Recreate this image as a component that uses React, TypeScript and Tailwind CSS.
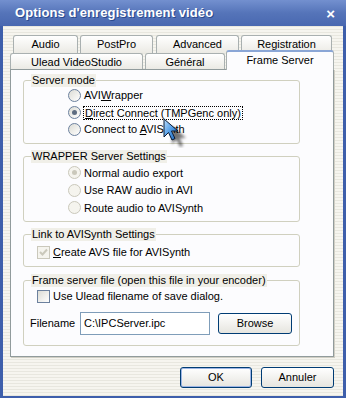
import React from 'react';

const font = "font-['Liberation_Sans',Arial,sans-serif]";

function Radio({ checked, disabled }: { checked?: boolean; disabled?: boolean }) {
  return (
    <div
      className={`w-[13px] h-[13px] rounded-full border flex items-center justify-center shrink-0 ${
        disabled
          ? 'border-[#cac8bb] bg-[#f5f4ee]'
          : 'border-[#6c819e] bg-gradient-to-br from-[#dcdcd5] to-white'
      }`}
    >
      {checked && (
        <div className={`w-[5px] h-[5px] rounded-full ${disabled ? 'bg-[#cac8bb]' : 'bg-[#5d6c80]'}`} />
      )}
    </div>
  );
}

function Check({ checked, disabled }: { checked?: boolean; disabled?: boolean }) {
  return (
    <div
      className={`w-[13px] h-[13px] border flex items-center justify-center shrink-0 ${
        disabled
          ? 'border-[#cac8bb] bg-[#f5f4ee]'
          : 'border-[#6c819e] bg-gradient-to-br from-[#dcdcd5] to-white'
      }`}
    >
      {checked && (
        <svg width="9" height="9" viewBox="0 0 9 9">
          <path d="M1 4 L3.5 6.5 L8 1.5" fill="none" stroke={disabled ? '#cac8bb' : '#21a121'} strokeWidth="2" />
        </svg>
      )}
    </div>
  );
}

export default function App() {
  const tab = 'h-full border border-b-0 border-[#a9b0b0] rounded-t-[3px] bg-gradient-to-b from-white to-[#ebeae4] flex items-center justify-center text-[11px] text-black';
  const group = 'ml-[12px] w-[277px] border border-[#d0d0bf] rounded-[3px] px-0';
  const legend = 'ml-[7px] px-[1px] bg-[#f0efe8] text-[11px] leading-[13px]';

  return (
    <div className={`relative w-[346px] h-[398px] flex flex-col bg-[#3e5fab] ${font} select-none`}>
      {/* Title bar */}
      <div className="h-[26px] shrink-0 flex items-center justify-between pl-[15px] pr-[11px] bg-gradient-to-b from-[#7390cf] via-[#5574b9] to-[#4968b0]">
        <span className="text-white font-bold text-[13px] tracking-[0.1px] [text-shadow:1px_1px_0_#2b4a8e]">
          Options d'enregistrement vidéo
        </span>
        <span className="text-white font-bold text-[15px] leading-none">×</span>
      </div>

      {/* Body */}
      <div className="flex-1 mx-[3px] mb-[2px] flex flex-col bg-[repeating-linear-gradient(0deg,#e8e7df_0px,#e8e7df_1px,#f6f5ef_1px,#f6f5ef_3px)]">
        {/* Tabs */}
        <div className="pt-[9px] pl-[10px] flex gap-[2px] h-[27px]">
          <div className={`${tab} w-[65px]`}>Audio</div>
          <div className={`${tab} w-[73px]`}>PostPro</div>
          <div className={`${tab} w-[83px] ml-[1px]`}>Advanced</div>
          <div className={`${tab} w-[91px]`}>Registration</div>
        </div>
        <div className="pl-[7px] flex items-end gap-[2px] h-[16px] relative">
          <div className={`${tab} w-[133px] pt-[1px]`}>Ulead VideoStudio</div>
          <div className={`${tab} w-[80px] pt-[1px]`}>Général</div>
          <div className="relative z-10 -mb-px w-[108px] h-[20px] -ml-px border border-b-0 border-[#a9b0b0] border-t-2 border-t-[#8aa6d6] rounded-t-[3px] bg-[#fcfcfe] flex items-center justify-center text-[11px] pb-[1px]">
            Frame Server
          </div>
        </div>

        {/* Panel */}
        <div className="ml-[7px] mr-[9px] h-[288px] border border-[#919b9c] bg-[#fcfcfe] shadow-[1px_1px_0_#d0cec4] text-[11px] text-black">
          <fieldset className={`${group} mt-[4px] pb-[5px]`}>
            <legend className={legend}>Server mode</legend>
            <div className="flex flex-col pl-[44px]">
              <div className="h-[17px] flex items-center gap-[3px]">
                <Radio />
                <span>AVI<u>W</u>rapper</span>
              </div>
              <div className="h-[17px] flex items-center gap-[2px]">
                <Radio checked />
                <span className="border border-dotted border-black px-[1px] leading-[12px]">
                  <u>D</u>irect Connect (TMPGenc only)
                </span>
              </div>
              <div className="h-[17px] flex items-center gap-[3px]">
                <Radio />
                <span>Connect to <u>A</u>VISynth</span>
              </div>
            </div>
          </fieldset>

          <fieldset className={`${group} mt-[6px] pt-[1px] pb-[4px]`}>
            <legend className={legend}>WRAPPER Server Settings</legend>
            <div className="flex flex-col pl-[44px]">
              <div className="h-[17.5px] flex items-center gap-[3px]">
                <Radio checked disabled />
                <span>Normal audio export</span>
              </div>
              <div className="h-[17.5px] flex items-center gap-[3px]">
                <Radio disabled />
                <span>Use RAW audio in AVI</span>
              </div>
              <div className="h-[17.5px] flex items-center gap-[3px]">
                <Radio disabled />
                <span>Route audio to AVISynth</span>
              </div>
            </div>
          </fieldset>

          <fieldset className={`${group} mt-[6px] pt-[3px] pb-[5px]`}>
            <legend className={legend}>Link to AVISynth Settings</legend>
            <div className="pl-[13px] h-[17px] flex items-center gap-[3px]">
              <Check checked disabled />
              <span><u>C</u>reate AVS file for AVISynth</span>
            </div>
          </fieldset>

          <fieldset className={`${group} mt-[7px] pt-[1px] pb-[10px]`}>
            <legend className={legend}>Frame server file (open this file in your encoder)</legend>
            <div className="pl-[13px] h-[17px] flex items-center gap-[3px]">
              <Check />
              <span>Use Ulead filename of save dialog.</span>
            </div>
            <div className="mt-[7px] pl-[6px] flex items-center">
              <span className="w-[50px]">Filename</span>
              <div className="w-[130px] h-[23px] border border-[#7f9db9] bg-white flex items-center px-[3px]">
                C:\IPCServer.ipc
              </div>
              <button className="ml-[8px] w-[74px] h-[21px] rounded-[3px] border border-[#003c74] bg-gradient-to-b from-white to-[#e6e5df] text-[11px] text-black">
                Browse
              </button>
            </div>
          </fieldset>
        </div>

        {/* Buttons */}
        <div className="mt-[10px] pr-[9px] flex justify-end gap-[9px]">
          <button className="w-[72px] h-[21px] rounded-[3px] border border-[#003c74] bg-gradient-to-b from-white to-[#e6e5df] shadow-[inset_0_0_0_1px_#9db5e4] text-[11px] text-black">
            OK
          </button>
          <button className="w-[73px] h-[21px] rounded-[3px] border border-[#003c74] bg-gradient-to-b from-white to-[#e6e5df] text-[11px] text-black">
            Annuler
          </button>
        </div>
      </div>

      {/* Mouse cursor */}
      <svg className="absolute left-[163px] top-[118px] pointer-events-none" width="32" height="30" viewBox="0 0 32 30">
        <defs>
          <linearGradient id="cur" x1="0" y1="0" x2="1" y2="1">
            <stop offset="0" stopColor="#bfe0ff" />
            <stop offset="0.5" stopColor="#4f9be6" />
            <stop offset="1" stopColor="#1d5fae" />
          </linearGradient>
          <filter id="sh" x="-50%" y="-50%" width="200%" height="200%">
            <feGaussianBlur stdDeviation="1.6" />
          </filter>
        </defs>
        <path d="M5 5 L5 23 L9.5 18.5 L13 26 L16 24.5 L12.5 17 L19 17 Z" fill="#000" opacity="0.55" filter="url(#sh)" transform="translate(4 3)" />
        <path d="M1 1 L1 19 L5.5 14.5 L9 22 L12 20.5 L8.5 13 L15 13 Z" fill="url(#cur)" stroke="#0a1a33" strokeWidth="1" strokeLinejoin="round" />
      </svg>
    </div>
  );
}
